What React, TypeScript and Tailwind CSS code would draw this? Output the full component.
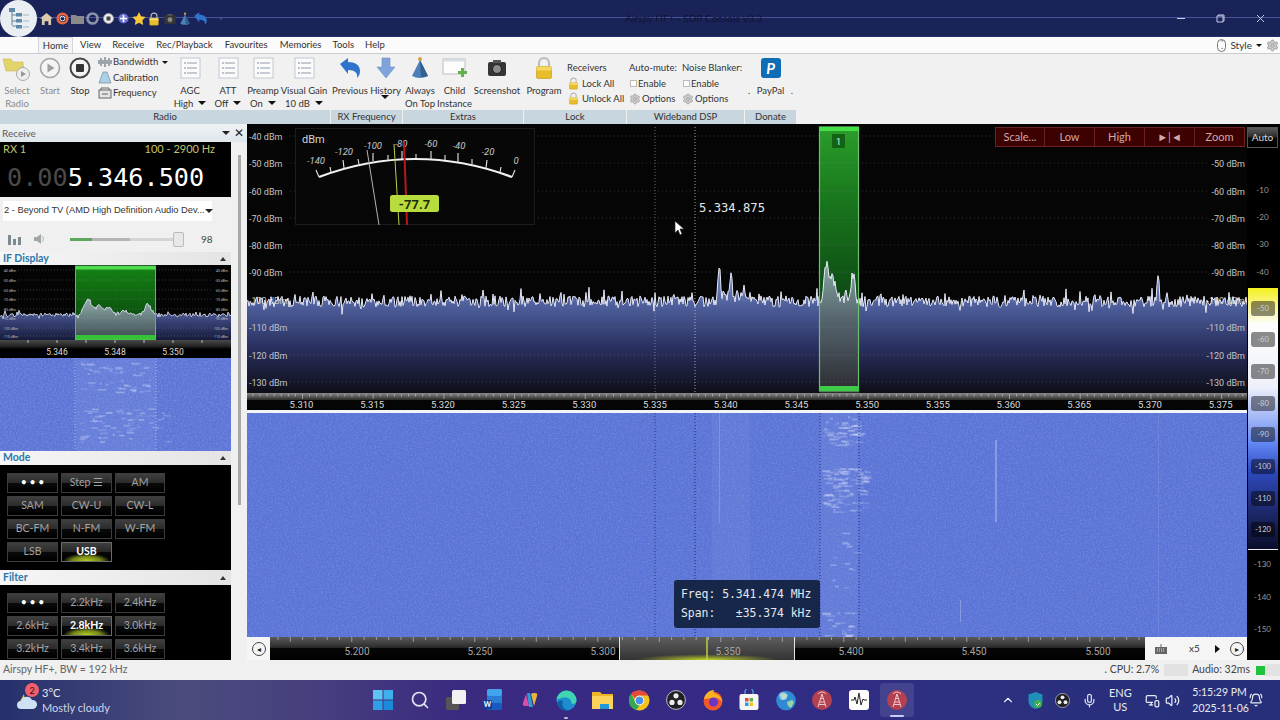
import type { ReactNode } from 'react'
import { Search, Settings, ChevronUp, Mic, Volume2, MonitorSmartphone, BellRing } from 'lucide-react'

// Seeded random so the spectrum comes out the same each run
function makeRng(seed: number) {
  let s = seed
  return () => {
    s = (s + 0x6d2b79f5) | 0
    let t = Math.imul(s ^ (s >>> 15), 1 | s)
    t = (t + Math.imul(t ^ (t >>> 7), 61 | t)) ^ t
    return ((t ^ (t >>> 14)) >>> 0) / 4294967296
  }
}

type Peak = [number, number, number]

function buildTrace(x0: number, x1: number, step: number, base: number, amp: number, peaks: Peak[], seed: number) {
  const rnd = makeRng(seed)
  const pts: string[] = []
  for (let x = x0; x <= x1; x += step) {
    let y = base - rnd() * amp
    if (rnd() < 0.14) y -= rnd() * amp * 0.9
    if (rnd() < 0.05) y += rnd() * amp * 0.8
    for (const [px, h, w] of peaks) y -= h * Math.exp(-(((x - px) / w) ** 2))
    pts.push(`${x},${y.toFixed(1)}`)
  }
  return pts
}

const mainPeaks: Peak[] = [
  [719, 36, 1.6], [731, 30, 1.6], [725, 7, 6], [748, 7, 8], [737, 9, 2], [826, 32, 3], [832, 24, 5],
  [853, 28, 2.5], [846, 10, 2], [1158, 30, 1.5], [558, 6, 2], [1098, 6, 2],
]
const mainTrace = buildTrace(247, 1247, 1, 307, 11, mainPeaks, 11)
const ifPeaks: Peak[] = [[88, 15, 5], [100, 9, 7], [110, 4, 4], [148, 11, 4], [126, 3, 8]]
const ifTrace = buildTrace(0, 231, 1, 317, 4, ifPeaks, 29)

// Blobs of signal in the waterfalls
function blobs(seed: number, n: number, x0: number, x1: number, y0: number, y1: number) {
  const rnd = makeRng(seed)
  return Array.from({ length: n }, () => ({
    x: x0 + rnd() * (x1 - x0),
    y: y0 + rnd() * (y1 - y0),
    w: 2 + rnd() * 7,
    o: 0.12 + rnd() * 0.3,
  }))
}

const dbRows = [
  ['-40 dBm', 136], ['-50 dBm', 163], ['-60 dBm', 191], ['-70 dBm', 218], ['-80 dBm', 245],
  ['-90 dBm', 272], ['-100 dBm', 300], ['-110 dBm', 327], ['-120 dBm', 355], ['-130 dBm', 382],
] as const

const rulerLabels = Array.from({ length: 14 }, (_, i) => ({ x: 301.5 + i * 70.7, t: (5.31 + i * 0.005).toFixed(3) }))

function Spectrum() {
  const line = mainTrace.join(' ')
  const area = `247,393 ${line} 1247,393`
  return (
    <svg width="1000" height="286" viewBox="247 124 1000 286" className="block font-['Roboto',sans-serif]">
      <defs>
        <linearGradient id="sf" x1="0" y1="290" x2="0" y2="393" gradientUnits="userSpaceOnUse">
          <stop offset="0" stopColor="#6478b4" />
          <stop offset="0.15" stopColor="#4e5f9c" />
          <stop offset="0.55" stopColor="#2a3060" />
          <stop offset="1" stopColor="#0e0e18" />
        </linearGradient>
        <linearGradient id="sg" x1="0" y1="127" x2="0" y2="300" gradientUnits="userSpaceOnUse">
          <stop offset="0" stopColor="#2a9e2a" />
          <stop offset="0.45" stopColor="#18741c" />
          <stop offset="1" stopColor="#0d4a14" />
        </linearGradient>
        <linearGradient id="sb" x1="0" y1="270" x2="0" y2="393" gradientUnits="userSpaceOnUse">
          <stop offset="0" stopColor="#7f9e9a" />
          <stop offset="0.4" stopColor="#56656f" />
          <stop offset="1" stopColor="#2b2b30" />
        </linearGradient>
        <linearGradient id="sr" x1="0" y1="393" x2="0" y2="400" gradientUnits="userSpaceOnUse">
          <stop offset="0" stopColor="#8a8a8a" />
          <stop offset="1" stopColor="#2a2a2a" />
        </linearGradient>
        <clipPath id="bandClip"><rect x="820" y="124" width="39" height="270" /></clipPath>
      </defs>
      <rect x="247" y="124" width="1000" height="286" fill="#050505" />
      <rect x="819" y="127" width="40" height="264" fill="url(#sg)" />
      <polygon points={area} fill="url(#sf)" />
      <polygon points={area} fill="url(#sb)" clipPath="url(#bandClip)" />
      {dbRows.map(([t, y]) => (
        <g key={t}>
          <line x1="290" x2="1210" y1={y} y2={y} stroke="#9aa0b0" strokeOpacity="0.3" strokeDasharray="1 3" />
          <text x="249" y={y + 3.5} fontSize="9" fill="#c4c4c4">{t}</text>
          {y > 140 && <text x="1245" y={y + 3.5} fontSize="9" fill="#c4c4c4" textAnchor="end">{t}</text>}
        </g>
      ))}
      <line x1="655" x2="655" y1="127" y2="393" stroke="#b0b0b0" strokeOpacity="0.6" strokeDasharray="1 2" />
      <line x1="695" x2="695" y1="127" y2="393" stroke="#d0d0d0" strokeOpacity="0.75" strokeDasharray="1 2" />
      <polyline points={line} fill="none" stroke="#e6e8f6" strokeWidth="1" />
      <rect x="819.5" y="127" width="39" height="264" fill="none" stroke="#6cc06c" strokeWidth="1.2" />
      <rect x="819" y="127" width="40" height="4" fill="#45e045" />
      <rect x="819" y="386" width="40" height="5" fill="#3ecb4a" />
      <rect x="832" y="134" width="13" height="14" rx="1" fill="#146214" />
      <text x="838.5" y="144.5" fontSize="9" fill="#dff5df" textAnchor="middle">1</text>
      <rect x="247" y="393" width="1000" height="7" fill="url(#sr)" />
      {Array.from({ length: 142 }, (_, i) => (
        <line key={i} x1={253 + i * 7.07} x2={253 + i * 7.07} y1="394" y2={i % 10 === 7 ? 399 : 396.5} stroke="#d8d8d8" strokeOpacity="0.55" />
      ))}
      {rulerLabels.map(l => (
        <text key={l.t} x={l.x} y="408" fontSize="9.5" fill="#dcdcdc" textAnchor="middle">{l.t}</text>
      ))}
    </svg>
  )
}

// Noise filter is shared by both waterfalls
function WaterfallBase({ id }: { id: string }) {
  return (
    <>
      <filter id={id} x="0" y="0" width="100%" height="100%">
        <feTurbulence type="fractalNoise" baseFrequency="0.6" numOctaves="2" seed="4" />
        <feColorMatrix values="0 0 0 0 0.75  0 0 0 0 0.82  0 0 0 0 1  1.6 0 0 0 -0.62" />
      </filter>
      <filter id={`${id}-soft`} x="-5%" y="-5%" width="110%" height="110%">
        <feGaussianBlur stdDeviation="0.5" />
      </filter>
    </>
  )
}

const mainBlobs = [
  ...blobs(3, 60, 822, 858, 416, 445),
  ...blobs(5, 100, 822, 866, 468, 512),
  ...blobs(7, 26, 822, 858, 612, 637),
  ...blobs(9, 14, 826, 858, 520, 590),
]

function MainWaterfall() {
  return (
    <svg width="1000" height="224" viewBox="247 413 1000 224" className="block">
      <defs>
        <WaterfallBase id="wfn" />
      </defs>
      <rect x="247" y="413" width="1000" height="224" fill="#5a73d6" />
      <rect x="247" y="413" width="1000" height="224" filter="url(#wfn)" opacity="0.22" />
      <rect x="712" y="413" width="38" height="224" fill="#8ea2e6" opacity="0.14" />
      <rect x="820" y="413" width="38" height="224" fill="#8ea2e6" opacity="0.16" />
      <g filter="url(#wfn-soft)">
        <rect x="719" y="413" width="1" height="110" fill="#b9c6f2" opacity="0.3" />
        <rect x="995" y="440" width="2" height="82" fill="#c5d0f5" opacity="0.4" />
        <rect x="1158" y="413" width="1" height="224" fill="#a8b8ef" opacity="0.2" />
        <rect x="960" y="600" width="1" height="22" fill="#c5d0f5" opacity="0.4" />
        {mainBlobs.map((b, i) => (
          <rect key={i} x={b.x} y={b.y} width={b.w} height="1.8" fill="#d8e0fa" opacity={b.o} />
        ))}
      </g>
      <line x1="655" x2="655" y1="413" y2="637" stroke="#2c3a80" strokeDasharray="1 2" />
      <line x1="695" x2="695" y1="413" y2="637" stroke="#1f2a66" strokeDasharray="1 2" />
      <line x1="820" x2="820" y1="413" y2="637" stroke="#26357e" strokeDasharray="1 2" />
      <line x1="859" x2="859" y1="413" y2="637" stroke="#26357e" strokeDasharray="1 2" />
    </svg>
  )
}

const ifBlobs = [...blobs(13, 50, 78, 152, 362, 392), ...blobs(17, 60, 78, 166, 408, 444)]

function IfDisplay() {
  const line = ifTrace.join(' ')
  const area = `0,340 ${line} 231,340`
  const rows = [270, 280, 290, 299, 309, 318, 328, 336]
  return (
    <svg width="231" height="93" viewBox="0 265 231 93" className="block font-['Roboto',sans-serif]">
      <defs>
        <linearGradient id="if" x1="0" y1="310" x2="0" y2="340" gradientUnits="userSpaceOnUse">
          <stop offset="0" stopColor="#4c5a9a" />
          <stop offset="1" stopColor="#161a3a" />
        </linearGradient>
        <linearGradient id="ig" x1="0" y1="265" x2="0" y2="320" gradientUnits="userSpaceOnUse">
          <stop offset="0" stopColor="#148414" />
          <stop offset="1" stopColor="#0b4d0f" />
        </linearGradient>
        <linearGradient id="ib" x1="0" y1="300" x2="0" y2="340" gradientUnits="userSpaceOnUse">
          <stop offset="0" stopColor="#8eaaa8" />
          <stop offset="1" stopColor="#3b4a50" />
        </linearGradient>
        <linearGradient id="ir" x1="0" y1="340" x2="0" y2="358" gradientUnits="userSpaceOnUse">
          <stop offset="0" stopColor="#4a4a4a" />
          <stop offset="0.35" stopColor="#222" />
          <stop offset="0.5" stopColor="#000" />
        </linearGradient>
        <clipPath id="ifClip"><rect x="75" y="265" width="81" height="75" /></clipPath>
      </defs>
      <rect x="0" y="265" width="231" height="75" fill="#040404" />
      <rect x="75" y="266" width="81" height="74" fill="url(#ig)" />
      <polygon points={area} fill="url(#if)" />
      <polygon points={area} fill="url(#ib)" clipPath="url(#ifClip)" />
      {rows.map((y, i) => (
        <g key={y}>
          <line x1="18" x2="213" y1={y} y2={y} stroke="#aaa" strokeOpacity="0.3" strokeDasharray="1 2" />
          <text x="3" y={y + 1.5} fontSize="3.5" fill="#bbb">{`-${40 + i * 10} dBm`}</text>
          <text x="228" y={y + 1.5} fontSize="3.5" fill="#bbb" textAnchor="end">{`-${40 + i * 10} dBm`}</text>
        </g>
      ))}
      <polyline points={line} fill="none" stroke="#e6e8f6" strokeWidth="0.8" />
      <rect x="75" y="266" width="81" height="3.5" fill="#4ce04c" />
      <rect x="75" y="335" width="81" height="5" fill="#36c236" />
      <rect x="75.5" y="266" width="80" height="74" fill="none" stroke="#58c058" />
      <rect x="0" y="340" width="231" height="18" fill="url(#ir)" />
      {[28, 57, 86, 115, 144, 173, 202].map(x => (
        <line key={x} x1={x} x2={x} y1="340" y2="343" stroke="#bbb" />
      ))}
      <text x="57" y="354.5" fontSize="8.5" fill="#ddd" textAnchor="middle">5.346</text>
      <text x="115" y="354.5" fontSize="8.5" fill="#ddd" textAnchor="middle">5.348</text>
      <text x="173" y="354.5" fontSize="8.5" fill="#ddd" textAnchor="middle">5.350</text>
    </svg>
  )
}

function IfWaterfall() {
  return (
    <svg width="231" height="93" viewBox="0 358 231 93" className="block">
      <defs>
        <WaterfallBase id="ifn" />
      </defs>
      <rect x="0" y="358" width="231" height="93" fill="#5c74d6" />
      <rect x="0" y="358" width="231" height="93" filter="url(#ifn)" opacity="0.26" />
      <rect x="76" y="358" width="80" height="93" fill="#8ea2e6" opacity="0.2" />
      <g filter="url(#ifn-soft)">
        {ifBlobs.map((b, i) => (
          <rect key={i} x={b.x} y={b.y} width={b.w} height="1.6" fill="#d8e0fa" opacity={b.o} />
        ))}
      </g>
      <line x1="75" x2="75" y1="358" y2="451" stroke="#dfe6fb" strokeOpacity="0.55" strokeDasharray="1 2" />
      <line x1="156" x2="156" y1="358" y2="451" stroke="#dfe6fb" strokeOpacity="0.55" strokeDasharray="1 2" />
    </svg>
  )
}

function Meter() {
  const labels: [string, number, number][] = [
    ['-140', 316, 164], ['-120', 344, 155], ['-100', 373, 149], ['-80', 401, 147],
    ['-60', 431, 147], ['-40', 459, 149], ['-20', 488, 155], ['0', 516, 164],
  ]
  const ticks: [number, number, number, number][] = [
    [319, 177, 316, 170], [331, 172, 330, 167], [344, 168, 343, 160], [359, 164, 358, 159], [373, 161, 373, 153],
    [388, 160, 388, 155], [402, 159, 402, 151], [416, 159, 416, 154], [431, 159, 431, 151], [445, 160, 445, 155],
    [458, 162, 458, 153], [472, 164, 472, 159], [486, 168, 487, 160], [500, 172, 501, 167], [512, 177, 515, 170],
  ]
  return (
    <svg width="240" height="98" viewBox="295 128 240 98" className="block font-['Roboto',sans-serif]">
      <rect x="295.5" y="128.5" width="239" height="96" fill="#070707" stroke="#1c1c1c" />
      <text x="302" y="143" fontSize="11" fill="#d4d4d4">dBm</text>
      {labels.map(([t, x, y]) => (
        <text key={t} x={x} y={y} fontSize="9.5" fontStyle="italic" fill="#c8c8c8" textAnchor="middle">{t}</text>
      ))}
      <path d="M319 177 Q415 141 512 177" fill="none" stroke="#f2f2f2" strokeWidth="2.2" />
      {ticks.map(([x1, y1, x2, y2], i) => (
        <line key={i} x1={x1} y1={y1} x2={x2} y2={y2} stroke="#e8e8e8" strokeWidth="1.1" />
      ))}
      <line x1="367" y1="150" x2="379" y2="225" stroke="#b4b4b4" />
      <line x1="394" y1="144" x2="399" y2="225" stroke="#b8d048" />
      <line x1="404" y1="142" x2="407" y2="225" stroke="#b81818" strokeWidth="2" />
      <rect x="390" y="195" width="49" height="17" rx="2.5" fill="#b8dc3e" />
      <text x="414.5" y="208.5" fontSize="13" fontWeight="700" fill="#1f2b08" textAnchor="middle">-77.7</text>
    </svg>
  )
}

function Overview() {
  const labels: [string, number][] = [
    ['5.200', 357], ['5.250', 480], ['5.300', 603], ['5.350', 728], ['5.400', 851], ['5.450', 974], ['5.500', 1098],
  ]
  return (
    <svg width="875" height="23" viewBox="270 637 875 23" className="block font-['Roboto',sans-serif]">
      <defs>
        <linearGradient id="ot" x1="0" y1="0" x2="0" y2="1">
          <stop offset="0" stopColor="#5a5a5a" />
          <stop offset="0.45" stopColor="#2c2c2c" />
          <stop offset="0.5" stopColor="#070707" />
          <stop offset="1" stopColor="#000" />
        </linearGradient>
        <linearGradient id="oh" x1="0" y1="0" x2="0" y2="1">
          <stop offset="0" stopColor="#5e5e5e" />
          <stop offset="1" stopColor="#333" />
        </linearGradient>
        <radialGradient id="og" cx="707" cy="660" r="72" gradientUnits="userSpaceOnUse" gradientTransform="translate(0 607.2) scale(1 0.08)">
          <stop offset="0" stopColor="#c8d828" />
          <stop offset="1" stopColor="#c8d828" stopOpacity="0" />
        </radialGradient>
      </defs>
      <rect x="270" y="637" width="875" height="23" fill="url(#ot)" />
      <rect x="619.5" y="637" width="175" height="23" fill="url(#oh)" />
      <rect x="619.5" y="637" width="175" height="23" fill="url(#og)" />
      {Array.from({ length: 72 }, (_, i) => (
        <line key={i} x1={278 + i * 12.3} x2={278 + i * 12.3} y1="637" y2={i % 5 === 1 ? 642 : 640} stroke="#bbb" strokeOpacity="0.7" />
      ))}
      <line x1="619.5" x2="619.5" y1="637" y2="660" stroke="#e4e4e4" />
      <line x1="794.5" x2="794.5" y1="637" y2="660" stroke="#e4e4e4" />
      <line x1="707" x2="707" y1="637" y2="660" stroke="#c4d440" strokeWidth="1.4" />
      {labels.map(([t, x]) => (
        <text key={t} x={x} y="655" fontSize="10" fill="#a4a4a4" textAnchor="middle">{t}</text>
      ))}
    </svg>
  )
}

// ---- ribbon icons ----
const ListIcon = () => (
  <svg width="21" height="22" viewBox="0 0 21 22">
    <rect x="1" y="1" width="19" height="20" fill="#fbfbfb" stroke="#c2c8d0" />
    {[6, 11, 16].map(y => (
      <g key={y}>
        <rect x="4" y={y - 0.5} width="2" height="1" fill="#7c8aa0" />
        <rect x="7" y={y - 0.5} width="10" height="1" fill="#8f9bb0" />
      </g>
    ))}
  </svg>
)

const FolderPlay = () => (
  <svg width="30" height="28" viewBox="0 0 30 28">
    <path d="M1 5h8l2 3h10l1 9H4z" fill="#e2d46a" stroke="#c9bb55" strokeWidth="0.6" />
    <circle cx="21" cy="20" r="6.5" fill="#eee" stroke="#a8a8a8" />
    <path d="M19 17l5 3-5 3z" fill="#999" />
  </svg>
)

const RoundPlay = () => (
  <svg width="22" height="22" viewBox="0 0 22 22">
    <circle cx="11" cy="11" r="9.5" fill="#f4f4f4" stroke="#a4a4a4" strokeWidth="1.6" />
    <path d="M8.5 6.5l7 4.5-7 4.5z" fill="#a0a0a0" />
  </svg>
)

const RoundStop = () => (
  <svg width="22" height="22" viewBox="0 0 22 22">
    <circle cx="11" cy="11" r="9.5" fill="#f4f4f4" stroke="#444" strokeWidth="2" />
    <rect x="7" y="7" width="8" height="8" rx="1" fill="#333" />
  </svg>
)

const UndoArrow = ({ size = 24 }: { size?: number }) => (
  <svg width={size} height={size} viewBox="0 0 24 24">
    <path d="M2 8l8-6v4c7 0 12 3 12 9 0 3-1 5-3 7 1-5-2-8-9-8v4z" fill="#2f74cc" />
  </svg>
)

const DownArrow = () => (
  <svg width="20" height="24" viewBox="0 0 20 24">
    <path d="M6 2h8v9h5L10 22 1 11h5z" fill="#7fa3da" stroke="#6a8fc8" strokeWidth="0.6" />
  </svg>
)

const Pyramid = ({ size = 24 }: { size?: number }) => (
  <svg width={size} height={size} viewBox="0 0 24 24">
    <circle cx="12" cy="3" r="2" fill="#d9a23a" />
    <path d="M12 4L4 20q8 4 16 0z" fill="#4d7fb8" />
    <path d="M12 4l1 17q4-0 7-1z" fill="#32608f" />
  </svg>
)

const ChildWindow = () => (
  <svg width="26" height="24" viewBox="0 0 26 24">
    <rect x="1" y="3" width="22" height="15" fill="#fdfdfd" stroke="#b8bcc2" />
    <rect x="1" y="3" width="22" height="2.5" fill="#d8dde2" />
    <path d="M16 15h3v-3h3v3h3v3h-3v3h-3v-3h-3z" fill="#62b24c" />
  </svg>
)

const Camera = ({ size = 22 }: { size?: number }) => (
  <svg width={size} height={size} viewBox="0 0 22 22">
    <rect x="2" y="5" width="18" height="14" rx="2" fill="#353535" />
    <rect x="7" y="3" width="8" height="3" fill="#555" />
    <circle cx="11" cy="12" r="4.5" fill="#8a8a8a" stroke="#222" />
  </svg>
)

const GoldLock = ({ size = 24 }: { size?: number }) => (
  <svg width={size} height={size} viewBox="0 0 24 24">
    <path d="M7 11V7a5 5 0 0 1 10 0v4" fill="none" stroke="#b9b9b9" strokeWidth="2" />
    <rect x="4.500" y="10.500" width="15" height="12" rx="1.500" fill="#e7bd2c" stroke="#c59b15" strokeWidth="0.7" />
    <rect x="4.500" y="10.500" width="15" height="4" fill="#f4d862" />
  </svg>
)

const PayPalTile = () => (
  <span className="flex h-[20px] w-[20px] items-center justify-center rounded-[3px] bg-[#0f6db5] text-[15px] font-bold italic leading-none text-white">P</span>
)

function BigBtn({ w, icon, lines, muted, arrow }: { w: string; icon: ReactNode; lines: string[]; muted?: boolean; arrow?: boolean }) {
  return (
    <div className={`flex shrink-0 flex-col items-center ${w}`}>
      <div className="flex h-[30px] items-center justify-center pb-[2px]">{icon}</div>
      <div className={`text-center leading-[13px] whitespace-nowrap ${muted ? 'text-[#8a8a8a]' : 'text-[#333]'}`}>
        <div>{lines[0]}</div>
        <div className="flex items-center justify-center gap-[5px]">
          {lines[1] ?? ''}
          {arrow && <span className="mt-[-2px] h-0 w-0 border-x-[4px] border-t-[4px] border-x-transparent border-t-[#111]" />}
        </div>
      </div>
    </div>
  )
}

function Group({ w, label, children }: { w: string; label: string; children: ReactNode }) {
  return (
    <div className={`flex shrink-0 flex-col ${w}`}>
      <div className="flex h-[56px] items-start">{children}</div>
      <div className="flex h-[14px] items-center justify-center bg-[#c8d6df] text-[#333]">{label}</div>
    </div>
  )
}

function Ribbon() {
  return (
    <div className="flex h-[71px] gap-[1px] border-t border-[#c8cccf] bg-[#f1f1f1] text-[9.5px]">
      <Group w="w-[330px]" label="Radio">
        <BigBtn w="w-[34px]" icon={<FolderPlay />} lines={['Select', 'Radio']} muted />
        <BigBtn w="w-[32px]" icon={<RoundPlay />} lines={['Start']} muted />
        <BigBtn w="w-[28px]" icon={<RoundStop />} lines={['Stop']} />
        <div className="flex w-[78px] shrink-0 flex-col gap-[1.5px] pl-[4px] pt-[1px] leading-[14px] text-[#333]">
          <div className="flex items-center gap-[1px]">
            <svg width="14" height="12" viewBox="0 0 14 12"><path d="M1 4v4M3 2v8M5 4v4M7 1v10M9 4v4M11 2v8M13 4v4" stroke="#5b6678" strokeWidth="1.1" /></svg>
            Bandwidth<span className="ml-[3px] h-0 w-0 border-x-[3px] border-t-[3px] border-x-transparent border-t-[#111]" />
          </div>
          <div className="flex items-center gap-[1px]">
            <svg width="14" height="13" viewBox="0 0 14 13"><path d="M5 1h4l4 11H1z" fill="#a8d0e8" stroke="#7d8a96" strokeWidth="0.7" /></svg>
            Calibration
          </div>
          <div className="flex items-center gap-[1px]">
            <svg width="14" height="12" viewBox="0 0 14 12"><rect x="1" y="3" width="12" height="8" fill="#e4e4e4" stroke="#666" /><path d="M3 3V1h8v2M4 7h6" stroke="#666" fill="none" /></svg>
            Frequency
          </div>
        </div>
        <BigBtn w="w-[36px]" icon={<ListIcon />} lines={['AGC', 'High']} arrow />
        <BigBtn w="w-[40px]" icon={<ListIcon />} lines={['ATT', 'Off']} arrow />
        <BigBtn w="w-[30px]" icon={<ListIcon />} lines={['Preamp', 'On']} arrow />
        <BigBtn w="w-[52px]" icon={<ListIcon />} lines={['Visual Gain', '10 dB']} arrow />
      </Group>
      <Group w="w-[71px]" label="RX Frequency">
        <BigBtn w="w-[38px]" icon={<UndoArrow />} lines={['Previous']} />
        <BigBtn w="w-[33px]" icon={<DownArrow />} lines={['History', '']} arrow />
      </Group>
      <Group w="w-[120px]" label="Extras">
        <BigBtn w="w-[34px]" icon={<Pyramid />} lines={['Always', 'On Top']} />
        <BigBtn w="w-[35px]" icon={<ChildWindow />} lines={['Child', 'Instance']} />
        <BigBtn w="w-[50px]" icon={<Camera />} lines={['Screenshot']} />
      </Group>
      <Group w="w-[102px]" label="Lock">
        <BigBtn w="w-[40px]" icon={<GoldLock />} lines={['Program']} />
        <div className="flex flex-col pl-[3px] pt-[6px] leading-[15.5px] text-[#333] whitespace-nowrap">
          <div>Receivers</div>
          <div className="flex items-center gap-[2px]"><GoldLock size={13} />Lock All</div>
          <div className="flex items-center gap-[2px]"><GoldLock size={13} />Unlock All</div>
        </div>
      </Group>
      <Group w="w-[117px]" label="Wideband DSP">
        <DspColumn title="Auto-mute:" w="w-[53px]" />
        <DspColumn title="Noise Blanker:" w="w-[64px]" />
      </Group>
      <Group w="w-[51px]" label="Donate">
        <div className="flex w-[51px] flex-col items-center">
          <div className="flex h-[30px] items-center justify-center pb-[2px]"><PayPalTile /></div>
          <div className="flex w-full justify-between px-[3px] leading-[13px] text-[#333]"><span>.</span><span>PayPal</span><span>.</span></div>
        </div>
      </Group>
    </div>
  )
}

function DspColumn({ title, w }: { title: string; w: string }) {
  return (
    <div className={`flex shrink-0 flex-col pl-[2px] pt-[6px] leading-[15.5px] text-[#333] whitespace-nowrap ${w}`}>
      <div>{title}</div>
      <div className="flex items-center gap-[1px] pl-[1px]">
        <span className="h-[7px] w-[7px] border border-[#bbb] bg-white" />Enable
      </div>
      <div className="flex items-center gap-[1px]">
        <Settings size={12} className="text-[#aaa]" fill="#ccc" />Options
      </div>
    </div>
  )
}

// ---- left panel ----
function SectionHead({ title, h }: { title: string; h: string }) {
  return (
    <div className={`flex items-center justify-between bg-[linear-gradient(90deg,#f6f6f6,#e4e4e4)] px-[3px] pr-[5px] ${h}`}>
      <span className="text-[10.5px] font-bold text-[#2a78ad]">{title}</span>
      <span className="h-0 w-0 border-x-[3px] border-b-[4px] border-x-transparent border-b-[#333]" />
    </div>
  )
}

function ModeBtn({ label, active }: { label: string; active?: boolean }) {
  const dots = label.startsWith('•')
  return (
    <div
      className={`flex h-[20px] items-center justify-center border text-[10.5px] ${
        active
          ? 'border-[#6a6a6a] bg-[radial-gradient(ellipse_48%_42%_at_50%_100%,#b8cf1e_0%,#74851a_60%,transparent_100%),linear-gradient(#3f3f3f_0%,#272727_48%,#070707_52%,#000_100%)] font-bold text-white'
          : `border-[#3c3c3c] bg-[linear-gradient(#3f3f3f_0%,#2b2b2b_48%,#0a0a0a_52%,#000_100%)] ${dots ? 'text-white' : 'text-[#a2a2a2]'}`
      }`}
    >
      {label}
    </div>
  )
}

function ButtonGrid({ rows, active }: { rows: string[]; active: string }) {
  return (
    <div className="grid grid-cols-[51px_51px_50px] gap-x-[3px] gap-y-[3px] px-[7px] pt-[8px]">
      {rows.map((r, i) => (
        <ModeBtn key={i} label={r} active={r === active} />
      ))}
    </div>
  )
}

function LeftPanel() {
  return (
    <div className="flex w-[247px] shrink-0 flex-col bg-[#f0f0f0]">
      <div className="flex h-[18px] items-center justify-between bg-[linear-gradient(#eef2f5,#dfe7ec)] pl-[2px] pr-[3px] text-[10px] text-[#5c5c5c]">
        Receive
        <span className="flex items-center gap-[4px] text-[#222]">
          <span className="h-0 w-0 border-x-[4px] border-t-[4px] border-x-transparent border-t-[#222]" />
          <span className="text-[12px] leading-none">✕</span>
        </span>
      </div>
      <div className="flex min-h-0 flex-1">
        <div className="w-[231px] shrink-0 overflow-hidden">
          <div className="h-[55px] bg-black px-[3px]">
            <div className="flex justify-between pr-[13px] text-[11px] leading-[13px] text-[#c2c26a]">
              <span>RX 1</span>
              <span>100 - 2900 Hz</span>
            </div>
            <div className="whitespace-pre pl-[4px] pt-[8px] font-['DejaVu_Sans_Mono'] text-[25.2px] leading-[30px] text-white">
              <span className="text-[#4a4a4a]">0.00</span>5.346.500
            </div>
          </div>
          <div className="px-[3px] pt-[4px]">
            <div className="flex h-[20px] w-[209px] items-center justify-between bg-white pl-[1px] pr-[2px] font-['Liberation_Sans'] text-[9.3px] text-[#333]">
              <span className="whitespace-nowrap">2 - Beyond TV (AMD High Definition Audio Dev...</span>
              <span className="h-0 w-0 border-x-[4px] border-t-[4px] border-x-transparent border-t-[#222]" />
            </div>
          </div>
          <div className="flex h-[31px] items-center pl-[8px] pt-[5px] text-[10px] text-[#444]">
            <svg width="13" height="12" viewBox="0 0 13 12"><rect x="0" y="2" width="3" height="10" fill="#7e8a92" /><rect x="5" y="6" width="3" height="6" fill="#7e8a92" /><rect x="10" y="4" width="3" height="8" fill="#7e8a92" /></svg>
            <svg width="12" height="12" viewBox="0 0 12 12" className="ml-[12px]"><path d="M1 4h3l4-3v10L4 8H1z" fill="#a4a4a4" /><path d="M9 3a4 4 0 0 1 0 6" stroke="#8ad08a" fill="none" /></svg>
            <div className="relative ml-[25px] h-[3px] w-[108px] bg-[#d4d4d4]">
              <div className="h-full w-[22px] bg-[#5da65d]" />
              <div className="absolute left-[22px] top-0 h-full w-[38px] bg-[#b5b5b5]" />
              <div className="absolute right-[-6px] top-[-6px] h-[15px] w-[11px] rounded-[2px] border border-[#bbb] bg-[#e8e8e8]" />
            </div>
            <span className="ml-[23px]">98</span>
          </div>
          <SectionHead title="IF Display" h="h-[13px]" />
          <IfDisplay />
          <IfWaterfall />
          <SectionHead title="Mode" h="h-[14px]" />
          <div className="h-[105px] bg-black">
            <ButtonGrid rows={['• • •', 'Step ☰', 'AM', 'SAM', 'CW-U', 'CW-L', 'BC-FM', 'N-FM', 'W-FM', 'LSB', 'USB']} active="USB" />
          </div>
          <SectionHead title="Filter" h="h-[15px]" />
          <div className="h-[75px] bg-black">
            <ButtonGrid rows={['• • •', '2.2kHz', '2.4kHz', '2.6kHz', '2.8kHz', '3.0kHz', '3.2kHz', '3.4kHz', '3.6kHz']} active="2.8kHz" />
          </div>
        </div>
        <div className="flex flex-1 justify-center pt-[13px]">
          <div className="h-[350px] w-[3px] bg-[#a9a9a9]" />
        </div>
      </div>
    </div>
  )
}

function CenterPanel() {
  return (
    <div className="relative w-[1000px] shrink-0 bg-white">
      <Spectrum />
      <div className="h-[3px] bg-[#f2f4f8]" />
      <MainWaterfall />
      <div className="flex h-[23px] bg-[#f5f5f5]">
        <div className="flex w-[23px] items-center justify-center">
          <span className="flex h-[14px] w-[14px] items-center justify-center rounded-full border border-[#444] text-[8px] leading-none text-[#222]">◂</span>
        </div>
        <Overview />
        <div className="flex flex-1 items-center text-[10px] text-[#333]">
          <svg width="14" height="12" viewBox="0 0 14 12" className="ml-[9px]"><rect x="1" y="4" width="12" height="7" fill="#666" /><path d="M7 4V1" stroke="#666" /><path d="M3 6h8M3 8h8" stroke="#ddd" strokeDasharray="1 1" /></svg>
          <span className="ml-[21px]">x5</span>
          <span className="ml-[15px] h-0 w-0 border-y-[4px] border-l-[5px] border-y-transparent border-l-[#111]" />
          <span className="ml-[10px] flex h-[14px] w-[14px] items-center justify-center rounded-full border border-[#444] text-[8px] leading-none text-[#222]">▸</span>
        </div>
      </div>

      {/* overlays on top of the spectrum */}
      <div className="absolute left-[48px] top-[4px]">
        <Meter />
      </div>
      <div className="absolute right-[2px] top-[3px] flex h-[20px] bg-[#3d0101] text-[11px] leading-[17px] text-[#cfa9a9]">
        {['Scale...', 'Low', 'High', '►|◄', 'Zoom'].map(t => (
          <div key={t} className="w-[50px] border border-l-0 border-[#6a2222] text-center first:border-l">{t}</div>
        ))}
      </div>
      <div className="absolute left-[452px] top-[75px] font-['DejaVu_Sans_Mono'] text-[12.2px] text-[#e8e8e8]">5.334.875</div>
      <svg width="11" height="16" viewBox="0 0 11 16" className="absolute left-[427px] top-[96px]">
        <path d="M1 1v12l3-3 2 5 2-1-2-5h4z" fill="#fff" stroke="#222" strokeWidth="0.7" />
      </svg>
      <div className="absolute left-[427px] top-[456px] h-[48px] w-[146px] whitespace-pre rounded-[3px] bg-[#16274a] px-[7px] py-[5px] font-['DejaVu_Sans_Mono'] text-[11.4px] leading-[19px] text-[#e4e8ee]">
        {'Freq: 5.341.474 MHz\nSpan:   ±35.374 kHz'}
      </div>
    </div>
  )
}

function RightScale() {
  const pills = ['-50', '-60', '-70', '-80', '-90', '-100', '-110', '-120']
  return (
    <div className="flex w-[33px] shrink-0 flex-col bg-black pr-[2px] text-[8px] text-[#9a9a9a]">
      <div className="mt-[3px] flex h-[21px] shrink-0 items-center justify-center border border-[#555] bg-[linear-gradient(#5a5a5a_0%,#2a2a2a_48%,#050505_52%,#000_100%)] text-[10px] text-[#d8d8d8]">Auto</div>
      <div className="mt-[28px]">
        {['-10', '-20', '-30', '-40'].map(t => (
          <div key={t} className="flex h-[27.3px] items-center justify-center">{t}</div>
        ))}
      </div>
      <div className="ml-[1px] mt-[3px] h-[261px] shrink-0 bg-[linear-gradient(#f4f01e_0%,#f8f470_5%,#fdfdfd_14%,#eef0fb_38%,#5f85f2_60%,#2e4ac0_70%,#1e2a6e_85%,#0a0e2c_100%)] pt-[4px]">
        {pills.map(t => (
          <div key={t} className="flex h-[31.7px] items-center justify-center">
            <span className="h-[15px] w-[24px] rounded-[3px] bg-black/45 text-center text-[7.5px] leading-[15px] text-[#cfcfcf]">{t}</span>
          </div>
        ))}
      </div>
      <div className="ml-[1px] h-[1px] shrink-0 bg-[#eee]" />
      <div className="flex h-[20px] shrink-0 items-end justify-center">-130</div>
      <div className="flex h-[33px] shrink-0 items-end justify-center">-140</div>
      <div className="flex h-[32px] shrink-0 items-end justify-center">-150</div>
    </div>
  )
}

// ---- taskbar icons ----
const WinLogo = () => (
  <svg width="20" height="20" viewBox="0 0 20 20">
    <rect x="0" y="0" width="9.5" height="9.5" fill="#5fc4f2" />
    <rect x="10.5" y="0" width="9.5" height="9.5" fill="#3fb0ee" />
    <rect x="0" y="10.5" width="9.5" height="9.5" fill="#2f9fe6" />
    <rect x="10.5" y="10.5" width="9.5" height="9.5" fill="#1b8ad8" />
  </svg>
)
const TaskView = () => (
  <svg width="20" height="20" viewBox="0 0 20 20">
    <rect x="0" y="7" width="13" height="13" rx="1.5" fill="#555" />
    <rect x="6" y="0" width="14" height="14" rx="1.5" fill="#f2f2f2" />
  </svg>
)
const Word = () => (
  <svg width="20" height="22" viewBox="0 0 20 22">
    <rect x="4" y="0" width="15" height="21" rx="2" fill="#2b7cd3" />
    <rect x="4" y="0" width="15" height="7" rx="2" fill="#41a5ee" />
    <rect x="4" y="14" width="15" height="7" rx="2" fill="#185abd" />
    <rect x="0" y="11" width="9" height="9" rx="1" fill="#103f91" />
    <text x="4.5" y="18" fontSize="7" fontWeight="700" fill="#fff" textAnchor="middle">W</text>
  </svg>
)
const Copilot = () => (
  <svg width="16" height="16" viewBox="0 0 16 16">
    <path d="M5 1h3l3 14H7z" fill="#2e9bd8" />
    <path d="M1 11l3-9 3 12H3q-3 0-2-3z" fill="#d94fa4" />
    <path d="M11 1h2q3 0 2 3l-3 10-3-12z" fill="#e8b33a" />
  </svg>
)
const Edge = () => (
  <svg width="21" height="21" viewBox="0 0 21 21">
    <circle cx="10.5" cy="10.5" r="10" fill="#1c8ed0" />
    <path d="M0.5 10.5a10 10 0 0 1 20 0c0 3-3 4-5 3 0-4-3-6-6-6-5 0-9 2-9 3z" fill="#3fd4b2" />
    <path d="M7 11c-2 4 1 9 6 9-6 2-11-2-12-7 1-2 4-3 6-2z" fill="#0e5ea8" />
  </svg>
)
const Folder = () => (
  <svg width="21" height="20" viewBox="0 0 21 20">
    <path d="M0 2h8l2 2h11v15H0z" fill="#f0b429" />
    <rect x="0" y="6" width="21" height="13" fill="#fbd35a" />
    <rect x="8" y="14" width="9" height="5" fill="#1f9ad6" />
  </svg>
)
const Chrome = () => (
  <svg width="21" height="21" viewBox="0 0 21 21">
    <circle cx="10.5" cy="10.5" r="10" fill="#f3c21c" />
    <path d="M10.5 0.5a10 10 0 0 1 8.7 5H10.5a5 5 0 0 0-4.6 3L2 3.700A10 10 0 0 1 10.5 0.500z" fill="#e5483c" />
    <path d="M2 3.700l4.500 8a5 5 0 0 0 4 3.800l-3.300 4.500A10 10 0 0 1 2 3.700z" fill="#34a853" />
    <circle cx="10.5" cy="10.5" r="4.4" fill="#4c8df0" stroke="#fff" />
  </svg>
)
const Obs = ({ size = 20 }: { size?: number }) => (
  <svg width={size} height={size} viewBox="0 0 20 20">
    <circle cx="10" cy="10" r="9.4" fill="#1f1f24" stroke="#e4e4e4" strokeWidth="0.8" />
    <circle cx="10" cy="5.8" r="2.6" fill="#ececec" />
    <circle cx="6" cy="12.4" r="2.6" fill="#ececec" />
    <circle cx="14" cy="12.4" r="2.6" fill="#ececec" />
  </svg>
)
const Firefox = () => (
  <svg width="20" height="21" viewBox="0 0 20 21">
    <circle cx="10" cy="11" r="9.5" fill="#f0582a" />
    <path d="M1 9c1-5 5-9 10-9-1 2 0 3 2 4 4 1 6 5 6 8-2-4-6-5-9-4z" fill="#fbb124" />
    <circle cx="10.5" cy="12" r="4.5" fill="#6b34c4" />
  </svg>
)
const Store = () => (
  <svg width="20" height="22" viewBox="0 0 20 22">
    <path d="M6 5V3a4 4 0 0 1 8 0v2" fill="none" stroke="#4a90d0" strokeWidth="1.5" />
    <rect x="0.5" y="5" width="19" height="16" rx="2" fill="#f4f6f8" />
    <rect x="6" y="9" width="3.5" height="3.5" fill="#e5483c" />
    <rect x="10.5" y="9" width="3.5" height="3.5" fill="#60b13c" />
    <rect x="6" y="13.5" width="3.5" height="3.5" fill="#2e9bd8" />
    <rect x="10.5" y="13.5" width="3.5" height="3.5" fill="#f3c21c" />
  </svg>
)
const Globe = () => (
  <svg width="20" height="21" viewBox="0 0 20 21">
    <circle cx="10" cy="10.5" r="9.8" fill="#2f8ad6" />
    <path d="M4 4q5-2 8 1l-2 4-4 1zM11 12l5-2 2 2-3 6-3-2z" fill="#9fd2a2" />
    <circle cx="7" cy="6" r="4" fill="#cfe8fa" opacity="0.5" />
  </svg>
)
const SdrIcon = () => (
  <svg width="20" height="22" viewBox="0 0 20 22">
    <circle cx="10" cy="11" r="10" fill="#b4414f" />
    <path d="M10 5L6 18M10 5l4 13M7.5 13h5M8.5 9.5h3M7 15.5l6 0" stroke="#f0d6d8" strokeWidth="0.9" fill="none" />
    <path d="M6 5a5 5 0 0 1 8 0" stroke="#f0d6d8" strokeWidth="0.9" fill="none" />
  </svg>
)
const WaveTile = () => (
  <svg width="20" height="20" viewBox="0 0 20 20">
    <rect width="20" height="20" rx="3" fill="#fff" />
    <path d="M2 10h3l1-3 2 7 2-11 2 12 2-6 1 1h3" fill="none" stroke="#222" strokeWidth="1" />
  </svg>
)
const Shield = () => (
  <svg width="15" height="17" viewBox="0 0 15 17">
    <path d="M7.5 0l7 2.5V9c0 4-3 7-7 8-4-1-7-4-7-8V2.5z" fill="#1f8fb8" />
    <circle cx="10" cy="12" r="4" fill="#3eb04c" />
    <path d="M8 12l1.5 1.5L12 11" stroke="#fff" fill="none" />
  </svg>
)

const taskIcons: ReactNode[] = [
  <WinLogo />, <Search size={20} className="text-[#dfe4f0]" strokeWidth={2} />, <TaskView />, <Word />, <Copilot />, <Edge />,
  <Folder />, <Chrome />, <Obs />, <Firefox />, <Store />, <Globe />, <SdrIcon />, <WaveTile />,
]

function Taskbar() {
  return (
    <div className="flex h-[40px] items-center bg-[linear-gradient(90deg,#25306c_0%,#4b4c7d_14%,#46407e_24%,#3b2a80_36%,#342a85_55%,#2c2f80_75%,#262f78_100%)] text-[#e8eaf2]">
      <div className="relative flex w-[365px] shrink-0 items-center pl-[15px]">
        <svg width="24" height="24" viewBox="0 0 24 24" className="shrink-0">
          <path d="M4 15l5-9 1 7z" fill="#e8c04a" />
          <path d="M6 21a4 4 0 0 1 0-8 6 6 0 0 1 11-1 4.5 4.5 0 0 1 1 9z" fill="#cfe2f4" />
        </svg>
        <span className="absolute left-[25px] top-[-2px] flex h-[14px] w-[14px] items-center justify-center rounded-full bg-[#f0606a] text-[9px] leading-none text-[#2a0a10]">2</span>
        <div className="ml-[3px] text-[11px] leading-[15px]">
          <div>3°C</div>
          <div className="text-[#cfd3e6]">Mostly cloudy</div>
        </div>
      </div>
      <div className="flex">
        {taskIcons.map((icon, i) => (
          <div key={i} className="relative flex h-[40px] w-[36.6px] items-center justify-center">
            {icon}
            {i === 5 && <span className="absolute bottom-[1px] h-[2px] w-[4px] rounded-full bg-[#bbc]" />}
          </div>
        ))}
        <div className="relative ml-[3px] flex h-[34px] w-[34px] items-center justify-center self-center rounded-[3px] bg-white/10">
          <SdrIcon />
          <span className="absolute bottom-[0px] h-[2px] w-[14px] rounded-full bg-[#c7cdf5]" />
        </div>
      </div>
      <div className="ml-[87px] flex shrink-0 items-center text-[11px]">
        <ChevronUp size={14} />
        <span className="ml-[12.5px]"><Shield /></span>
        <span className="ml-[12px]"><Obs size={15} /></span>
        <Mic size={15} className="ml-[12px] text-[#d8dcea]" />
        <div className="ml-[6.5px] w-[34px] text-center leading-[14px]">ENG<br />US</div>
        <MonitorSmartphone size={15} className="ml-[7.5px]" />
        <Volume2 size={15} className="ml-[5px]" />
        <div className="ml-[12.5px] w-[52px] whitespace-nowrap text-center text-[10.5px] leading-[16px]">5:15:29 PM<br />2025-11-06</div>
        <BellRing size={14} className="ml-[5px]" />
      </div>
    </div>
  )
}

const quickIcons: ReactNode[] = [
  <svg width="13" height="12" viewBox="0 0 14 13"><path d="M7 0l7 6h-2v7H9V9H5v4H2V6H0z" fill="#d8cab0" /></svg>,
  <svg width="13" height="13" viewBox="0 0 13 13"><circle cx="6.5" cy="6.5" r="4.8" fill="none" stroke="#e8663a" strokeWidth="2.6" /><circle cx="6.5" cy="6.5" r="2.4" fill="none" stroke="#f4f0ea" strokeWidth="1" /></svg>,
  <svg width="13" height="10" viewBox="0 0 13 10"><path d="M0 1h5l1 1h7v8H0z" fill="#8a8a8a" /></svg>,
  <svg width="13" height="13" viewBox="0 0 13 13"><circle cx="6.5" cy="6.5" r="5" fill="none" stroke="#8c93a8" strokeWidth="2.6" /></svg>,
  <svg width="13" height="13" viewBox="0 0 13 13"><circle cx="6.5" cy="6.5" r="5" fill="#eee" stroke="#999" /><rect x="4.5" y="4.5" width="4" height="4" fill="#444" /></svg>,
  <svg width="13" height="13" viewBox="0 0 13 13"><circle cx="6.5" cy="6.5" r="5" fill="#6a70d0" /><path d="M6.5 3v7M3 6.5h7" stroke="#fff" strokeWidth="1.6" /></svg>,
  <svg width="14" height="13" viewBox="0 0 24 23"><path d="M12 0l3.7 7.6 8.3 1.2-6 5.8 1.4 8.4L12 19l-7.400 4L6 14.600 0 8.800l8.300-1.200z" fill="#f4c73c" /></svg>,
  <GoldLock size={14} />,
  <Camera size={14} />,
  <Pyramid size={14} />,
  <UndoArrow size={15} />,
]

function TitleBar() {
  return (
    <div className="relative flex h-[37px] shrink-0 flex-col bg-[#1a2358]">
      <div className="h-[18px] border-b border-[#46549a]" />
      <div className="flex-1 border-b border-[#27306a]" />
      {/* quick access row and window controls lie over the bar */}
      <div className="absolute inset-x-0 top-0 flex h-[37px] items-center">
        <div className="flex h-[37px] w-[37px] shrink-0 items-center justify-center rounded-full bg-[#e9eef2]">
          <svg width="24" height="24" viewBox="0 0 24 24">
            <path d="M5 3v15M5 8h4M5 14h4M5 19h4" stroke="#6c8296" fill="none" />
            <rect x="2" y="1" width="6" height="4" fill="#5d88a8" />
            <rect x="9" y="6" width="6" height="3.5" fill="#5d88a8" />
            <rect x="9" y="12" width="6" height="3.5" fill="#5d88a8" />
            <rect x="9" y="18" width="6" height="3.5" fill="#5d88a8" />
            <path d="M16 8h6M16 14h6M16 20h6" stroke="#aab4be" />
          </svg>
        </div>
        <div className="ml-[2px] flex blur-[0.4px]">
          {quickIcons.map((icon, i) => (
            <span key={i} className="flex h-[18px] w-[15.4px] items-center justify-center">{icon}</span>
          ))}
        </div>
        <span className="ml-[10px] h-0 w-0 border-x-[3px] border-t-[3px] border-x-transparent border-t-[#45507e]" />
        <span className="ml-[401px] text-[10px] text-[#0f1434]">Airspy HF+ - SDR Console v3.3</span>
        <div className="ml-auto flex items-center pr-[15px] text-[#c4cce6]">
          <span className="h-[1px] w-[8px] bg-[#c4cce6]" />
          <svg width="9" height="9" viewBox="0 0 9 9" className="ml-[31px]"><path d="M2 2V1h6v6H7M1 2h6v6H1z" fill="none" stroke="currentColor" /></svg>
          <svg width="9" height="9" viewBox="0 0 9 9" className="ml-[31px]"><path d="M1 1l7 7M8 1L1 8" stroke="currentColor" /></svg>
        </div>
      </div>
    </div>
  )
}

function MenuBar() {
  return (
    <div className="flex h-[16px] shrink-0 items-stretch bg-[#fbfbfb] pl-[38px] text-[9.5px] leading-[16px] text-[#333]">
      <span className="w-[35px] border-x border-t border-[#d6d6d6] bg-[#f4f4f4] text-center">Home</span>
      <span className="ml-[7px]">View</span>
      <span className="ml-[11px]">Receive</span>
      <span className="ml-[12px]">Rec/Playback</span>
      <span className="ml-[12px]">Favourites</span>
      <span className="ml-[12px]">Memories</span>
      <span className="ml-[11px]">Tools</span>
      <span className="ml-[11px]">Help</span>
      <span className="ml-auto flex items-center gap-[4px] pr-[1px] text-[10px]">
        <span className="flex h-[13px] w-[9px] flex-col items-center justify-center rounded-full border border-[#777] text-[5px] leading-[5px]">⌃<br />⌄</span>
        Style
        <span className="h-0 w-0 border-x-[3px] border-t-[3px] border-x-transparent border-t-[#111]" />
        <Settings size={13} className="text-[#aaa]" fill="#ccc" />
      </span>
    </div>
  )
}

export default function App() {
  return (
    <div className="flex h-[720px] w-[1280px] flex-col overflow-hidden bg-[#f0f0f0] font-['Lato',sans-serif]">
      <TitleBar />
      <MenuBar />
      <Ribbon />
      <div className="flex h-[536px] shrink-0 overflow-hidden">
        <LeftPanel />
        <CenterPanel />
        <RightScale />
      </div>
      <div className="flex h-[20px] shrink-0 items-center bg-[#f0f0f0] pl-[3px] text-[10.5px] text-[#666]">
        Airspy HF+, BW = 192 kHz
        <div className="ml-auto flex items-center text-[#444]">
          . CPU: 2.7%
          <span className="ml-[5px] h-[12px] w-[24px] bg-[#e2e2e2]" />
          <span className="ml-[4px]">Audio: 32ms</span>
          <span className="ml-[6px] h-[9px] w-[9px] bg-[#1fc23a]" />
          <span className="h-[12px] w-[15px] bg-[#e2e2e2]" />
        </div>
      </div>
      <Taskbar />
    </div>
  )
}
